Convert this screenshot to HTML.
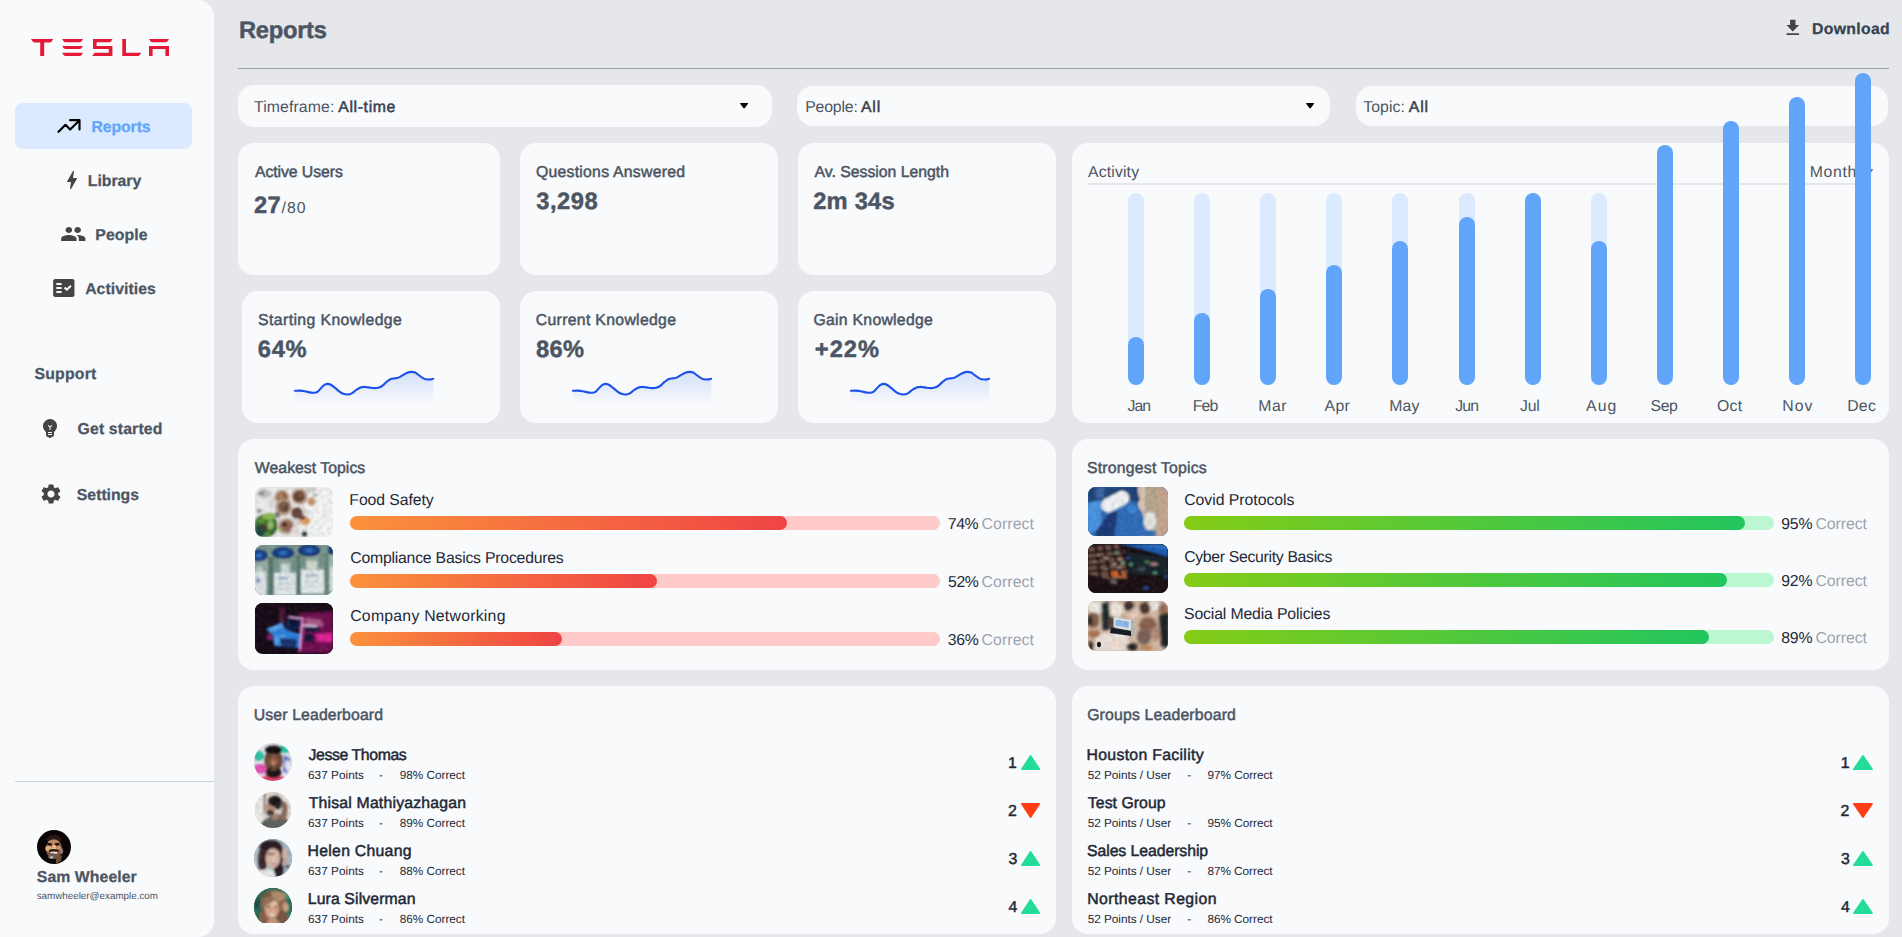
<!DOCTYPE html><html lang="en"><head><meta charset="utf-8"><title>Reports</title><style>
*{box-sizing:border-box;margin:0;padding:0}
html,body{width:1902px;height:937px;overflow:hidden;background:#e5e7eb}
body{position:relative;font-family:"Liberation Sans",sans-serif;color:#4b5563;text-rendering:geometricPrecision}
.t{position:absolute;white-space:pre;line-height:1;font-weight:400}
.b{font-weight:700;-webkit-text-stroke:.25px currentColor}
.bb{-webkit-text-stroke:.45px currentColor}
.sb{-webkit-text-stroke:.5px currentColor}
.abs{position:absolute}
.card{position:absolute;background:#f9fafb;border-radius:16px}
.sel{position:absolute;background:#f9fafb;border-radius:16px}
svg{position:absolute;display:block;overflow:visible}
.track{position:absolute;width:16px;border-radius:8px}
.bar{position:absolute;height:14px;border-radius:7px}
.av{position:absolute;border-radius:50%;overflow:hidden}
.th{position:absolute;border-radius:8px;overflow:hidden}
</style></head><body>
<aside aria-label="Sidebar"><nav>
<div class="abs" style="left:0;top:0;width:214px;height:937px;background:#f9fafb;border-radius:0 16px 16px 0"></div>
<svg role="img" aria-label="TESLA" style="left:31px;top:39px" width="138" height="17" viewBox="0 0 138 17" fill="#e31937"><title>TESLA</title>
<path d="M0 0H22.3L20.6 2.4Q20 3.4 18.6 3.4H13.2V17H9.2V3.4H3.7Q2.3 3.4 1.7 2.4Z"/>
<path d="M31.2 0H52L50.6 2.2Q50 3.2 48.6 3.2H34.6Q33.2 3.2 32.6 2.2Z"/>
<path d="M31.2 6.9H52L50.6 9.1Q50 10.1 48.6 10.1H34.6Q33.2 10.1 32.6 9.1Z"/>
<path d="M31.2 13.8H52L50.6 16Q50 17 48.6 17H34.6Q33.2 17 32.6 16Z"/>
<path d="M62 0H81.5L80.2 2.3Q79.6 3.3 78.2 3.3H65.6V6.9H81.4V17H61.2L63.6 13.8H77.8V10.1H62Z"/>
<path d="M91.3 0H95V13.7H110.2L108.8 16Q108.2 17 106.8 17H91.3Z"/>
<path d="M118 0H138L136.5 2.3Q135.9 3.3 134.5 3.3H121.5Q120.1 3.3 119.5 2.3Z"/>
<path d="M118 6.9H138V17H134.4V10.1H121.6V17H118Z"/>
</svg>
<div class="abs" style="left:15px;top:103px;width:177px;height:46px;background:#dbeafe;border-radius:8px"></div>
<svg style="left:54.7px;top:111.8px" width="28" height="28" viewBox="0 0 24 24" fill="none" stroke="#000" stroke-width="1.85" stroke-linecap="round" stroke-linejoin="round"><path d="M13 7h8m0 0v8m0-8l-8 8-4-4-6 6"/></svg>
<span id="t1" class="t b" style="left:91.42px;top:120.00px;font-size:15.80px;letter-spacing:-0.082px;color:#60a5fa;">Reports</span>
<svg style="left:60px;top:168.3px" width="24" height="24" viewBox="0 0 24 24" fill="#444"><path d="M11 21h-1l1-7H7.5c-.58 0-.57-.32-.38-.66.19-.34.05-.08.07-.12C8.48 10.94 10.42 7.54 13 3h1l-1 7h3.5c.49 0 .56.33.47.51l-.07.15C12.96 17.55 11 21 11 21z"/></svg>
<span id="t2" class="t b" style="left:87.75px;top:174.00px;font-size:15.80px;letter-spacing:-0.002px;color:#4b5563;">Library</span>
<svg style="left:60px;top:222px" width="26.5" height="24" viewBox="0 0 24 24" preserveAspectRatio="none" fill="#444"><path d="M16 11c1.66 0 2.99-1.34 2.99-3S17.66 5 16 5c-1.66 0-3 1.34-3 3s1.34 3 3 3zm-8 0c1.66 0 2.99-1.34 2.99-3S9.66 5 8 5C6.34 5 5 6.34 5 8s1.34 3 3 3zm0 2c-2.33 0-7 1.17-7 3.5V19h14v-2.5c0-2.33-4.67-3.5-7-3.5zm8 0c-.29 0-.62.02-.97.05 1.16.84 1.97 1.97 1.97 3.45V19h6v-2.5c0-2.33-4.67-3.5-7-3.5z"/></svg>
<span id="t3" class="t b" style="left:95.37px;top:228.00px;font-size:15.80px;letter-spacing:0.053px;color:#4b5563;">People</span>
<svg style="left:50.7px;top:275.9px" width="25.6" height="24" viewBox="0 0 24 24" preserveAspectRatio="none" fill="#444"><path d="M20 3H4c-1.1 0-2 .9-2 2v14c0 1.1.9 2 2 2h16c1.1 0 2-.9 2-2V5c0-1.1-.9-2-2-2zM10 17H5v-2h5v2zm0-4H5v-2h5v2zm0-4H5V7h5v2zm4.82 6L12 12.16l1.41-1.41 1.41 1.42L17.99 9l1.42 1.42L14.82 15z"/></svg>
<span id="t4" class="t b" style="left:85.16px;top:282.00px;font-size:15.80px;letter-spacing:0.053px;color:#4b5563;">Activities</span>
<span id="t5" class="t b" style="left:34.41px;top:367.00px;font-size:15.80px;letter-spacing:0.235px;color:#4b5563;">Support</span>
<svg style="left:38px;top:416px" width="24" height="24" viewBox="0 0 24 24" fill="#444"><path d="M12 3c-.46 0-.93.04-1.4.14-2.76.53-4.96 2.76-5.48 5.52-.48 2.61.48 5.01 2.22 6.56.43.38.66.91.66 1.47V19c0 1.1.9 2 2 2h.28c.35.6.98 1 1.72 1s1.38-.4 1.72-1H14c1.1 0 2-.9 2-2v-2.31c0-.55.22-1.09.64-1.46C18.09 13.95 19 12.08 19 10c0-3.87-3.13-7-7-7zm2 16h-4v-1h4v1zm0-2h-4v-1h4v1zm-1.500-5.590V14h-1v-2.590L9.670 9.590l.71-.71L12 10.500l1.620-1.620.71.71-1.830 1.820z"/></svg>
<span id="t6" class="t b" style="left:77.53px;top:422.00px;font-size:15.80px;letter-spacing:0.147px;color:#4b5563;">Get started</span>
<svg style="left:38.8px;top:482px" width="24" height="24" viewBox="0 0 24 24" fill="#444"><path d="M19.140 12.940c.04-.3.06-.61.06-.94 0-.32-.02-.64-.07-.94l2.030-1.580c.18-.14.23-.41.12-.61l-1.920-3.320c-.12-.22-.37-.29-.59-.22l-2.390.96c-.5-.38-1.030-.7-1.620-.94l-.36-2.540c-.04-.24-.24-.41-.48-.41h-3.840c-.24 0-.43.17-.47.41l-.36 2.540c-.59.24-1.130.57-1.620.94l-2.390-.96c-.22-.08-.47 0-.59.22L2.740 8.870c-.12.21-.08.47.12.61l2.030 1.580c-.05.3-.09.63-.09.94s.02.64.07.94l-2.030 1.580c-.18.14-.23.41-.12.61l1.920 3.320c.12.22.37.29.59.22l2.390-.96c.5.38 1.030.7 1.620.94l.36 2.540c.05.24.24.41.48.41h3.840c.24 0 .44-.17.47-.41l.36-2.540c.59-.24 1.130-.56 1.620-.94l2.390.96c.22.08.47 0 .59-.22l1.920-3.320c.12-.22.07-.47-.12-.61l-2.010-1.580zM12 15.600c-1.980 0-3.600-1.620-3.600-3.600s1.620-3.600 3.600-3.600 3.600 1.620 3.600 3.600-1.620 3.600-3.600 3.600z"/></svg>
<span id="t7" class="t b" style="left:76.87px;top:488.00px;font-size:15.80px;letter-spacing:-0.022px;color:#4b5563;">Settings</span>
</nav>
<div class="abs" style="left:15px;top:781px;width:199px;height:1px;background:#cbd5e1"></div>
<div class="av" style="left:37.2px;top:830px;width:34px;height:34px;background:#0a0608"><svg width="34" height="34" viewBox="0 0 34 34" style="left:0;top:0"><defs><filter id="bl0" x="-20%" y="-20%" width="140%" height="140%"><feGaussianBlur stdDeviation=".55"/></filter></defs><g filter="url(#bl0)">
<ellipse cx="17" cy="9.500" rx="7.500" ry="4.500" fill="#2a1914"/>
<ellipse cx="17" cy="19" rx="8.200" ry="10" fill="#7a5238"/>
<ellipse cx="16.500" cy="12" rx="5.500" ry="2.200" fill="#b98a62"/>
<ellipse cx="11.500" cy="18.500" rx="3.200" ry="3" fill="#e3b084"/><ellipse cx="17" cy="17.500" rx="2.300" ry="3" fill="#e9b98a"/><ellipse cx="21.500" cy="18" rx="2.600" ry="2.600" fill="#c9946c"/>
<ellipse cx="12.600" cy="14.300" rx="2.300" ry="1.200" fill="#1c0f0b"/><ellipse cx="20" cy="14.300" rx="2.300" ry="1.200" fill="#1c0f0b"/>
<ellipse cx="16.800" cy="20.600" rx="5" ry="1.500" fill="#2c1a14"/>
<ellipse cx="16.900" cy="22.800" rx="3.800" ry="1.300" fill="#eadbd0"/>
<ellipse cx="15.500" cy="26.300" rx="4.500" ry="3" fill="#6a5a52"/><ellipse cx="14.500" cy="27.300" rx="1.800" ry="1" fill="#cfc6c0"/>
<ellipse cx="24.300" cy="21" rx="1.800" ry="3" fill="#97786c"/>
<path d="M19 27L25 25L24 31L19 34Z" fill="#6e5038"/>
</g></svg></div>
<span id="t8" class="t b" style="left:36.84px;top:870.00px;font-size:15.80px;letter-spacing:0.071px;color:#4b5563;">Sam Wheeler</span>
<span id="t9" class="t " style="left:36.63px;top:892.00px;font-size:9.80px;letter-spacing:0.016px;color:#4b5563;">samwheeler@example.com</span>
</aside><main><header>
<span id="t10" class="t b bb" style="left:239.06px;top:20.00px;font-size:23.70px;letter-spacing:-0.282px;color:#4b5563;">Reports</span>
<svg style="left:1782.1px;top:17.1px" width="21.6" height="21.6" viewBox="0 0 24 24" fill="#444"><path d="M19 9h-4V3H9v6H5l7 7 7-7zM5 18v2h14v-2H5z"/></svg>
<span id="t11" class="t b" style="left:1811.98px;top:22.00px;font-size:15.80px;letter-spacing:0.322px;color:#374151;">Download</span>
<div class="abs" style="left:238px;top:68px;width:1651px;height:1px;background:#9ca3af"></div>
</header><section aria-label="Filters">
<div class="sel" style="left:238px;top:85px;width:534px;height:42px"></div>
<div class="sel" style="left:797px;top:86px;width:533px;height:40px"></div>
<div class="sel" style="left:1356px;top:86px;width:532px;height:40px"></div>
<svg style="left:739.7px;top:103.2px" width="8.2" height="5.6" viewBox="0 0 8.2 5.6" fill="#000"><path d="M.5 0H7.7Q8.500 0 8 .7L4.800 5Q4.100 5.900 3.400 5L.2 .7Q-.3 0 .5 0Z"/></svg>
<svg style="left:1305.7px;top:103.2px" width="8.2" height="5.6" viewBox="0 0 8.2 5.6" fill="#000"><path d="M.5 0H7.7Q8.500 0 8 .7L4.800 5Q4.100 5.900 3.400 5L.2 .7Q-.3 0 .5 0Z"/></svg>
<svg style="left:1863.4px;top:103.2px" width="8.2" height="5.6" viewBox="0 0 8.2 5.6" fill="#6b7280"><path d="M.5 0H7.7Q8.500 0 8 .7L4.800 5Q4.100 5.900 3.400 5L.2 .7Q-.3 0 .5 0Z"/></svg>
<span id="t12" class="t " style="left:253.98px;top:100.00px;font-size:15.80px;letter-spacing:0.113px;color:#4b5563;">Timeframe:</span>
<span id="t13" class="t sb" style="left:338.23px;top:100.00px;font-size:15.80px;letter-spacing:0.641px;color:#374151;">All-time</span>
<span id="t14" class="t " style="left:805.14px;top:100.00px;font-size:15.80px;letter-spacing:-0.134px;color:#4b5563;">People:</span>
<span id="t15" class="t sb" style="left:860.92px;top:100.00px;font-size:15.80px;letter-spacing:0.865px;color:#374151;">All</span>
<span id="t16" class="t " style="left:1363.36px;top:100.00px;font-size:15.80px;letter-spacing:0.029px;color:#4b5563;">Topic:</span>
<span id="t17" class="t sb" style="left:1408.68px;top:100.00px;font-size:15.80px;letter-spacing:0.928px;color:#374151;">All</span>
</section><section aria-label="Stats">
<div class="card" style="left:238px;top:143px;width:262px;height:132px"></div>
<div class="card" style="left:520px;top:143px;width:258px;height:132px"></div>
<div class="card" style="left:798px;top:143px;width:258px;height:132px"></div>
<div class="card" style="left:242px;top:291px;width:258px;height:132px"></div>
<div class="card" style="left:520px;top:291px;width:258px;height:132px"></div>
<div class="card" style="left:798px;top:291px;width:258px;height:132px"></div>
<span id="t18" class="t sb" style="left:254.92px;top:165.00px;font-size:15.80px;letter-spacing:-0.065px;">Active Users</span>
<span id="t19" class="t b bb" style="left:253.90px;top:195.00px;font-size:23.70px;letter-spacing:0.500px;">27</span>
<span id="t20" class="t " style="left:281.50px;top:201.00px;font-size:15.80px;letter-spacing:1.000px;">/80</span>
<span id="t21" class="t sb" style="left:535.99px;top:165.00px;font-size:15.80px;letter-spacing:0.242px;">Questions Answered</span>
<span id="t22" class="t b bb" style="left:536.15px;top:191.00px;font-size:23.70px;letter-spacing:0.563px;">3,298</span>
<span id="t23" class="t sb" style="left:814.54px;top:165.00px;font-size:15.80px;letter-spacing:-0.010px;">Av. Session Length</span>
<span id="t24" class="t b bb" style="left:813.16px;top:191.00px;font-size:23.70px;letter-spacing:0.244px;">2m 34s</span>
<span id="t25" class="t sb" style="left:258.09px;top:313.00px;font-size:15.80px;letter-spacing:0.396px;">Starting Knowledge</span>
<span id="t26" class="t b bb" style="left:257.83px;top:339.00px;font-size:23.70px;letter-spacing:0.673px;">64%</span>
<span id="t27" class="t sb" style="left:535.77px;top:313.00px;font-size:15.80px;letter-spacing:0.313px;">Current Knowledge</span>
<span id="t28" class="t b bb" style="left:536.03px;top:339.00px;font-size:23.70px;letter-spacing:0.307px;">86%</span>
<span id="t29" class="t sb" style="left:813.51px;top:313.00px;font-size:15.80px;letter-spacing:0.258px;">Gain Knowledge</span>
<span id="t30" class="t b bb" style="left:814.86px;top:339.00px;font-size:23.70px;letter-spacing:0.961px;">+22%</span>
<svg width="0" height="0" style="left:0;top:0"><defs><linearGradient id="sg" x1="0" y1="0" x2="0" y2="1"><stop offset="0" stop-color="#3b82f6" stop-opacity=".2"/><stop offset="1" stop-color="#2563eb" stop-opacity="0"/></linearGradient></defs></svg>
<svg style="left:295.4px;top:368px" width="139" height="37" viewBox="0 0 139 37"><path d="M-0.1 22.8C0.8 22.8 3.5 22.5 5.1 22.6C6.8 22.7 8.2 22.9 9.8 23.2C11.4 23.5 13.1 24.1 14.5 24.4C15.9 24.7 17.2 24.9 18.5 24.8C19.8 24.7 21.1 24.7 22.4 23.8C23.7 23.0 25.2 20.8 26.4 19.7C27.6 18.5 28.4 17.5 29.5 16.9C30.6 16.3 31.7 15.9 32.7 15.9C33.8 15.9 34.6 16.1 35.8 16.7C37.0 17.3 38.4 18.5 39.8 19.7C41.3 20.8 43.1 22.6 44.5 23.6C45.9 24.6 47.1 25.3 48.4 25.8C49.7 26.3 51.1 26.5 52.4 26.5C53.7 26.5 54.9 26.4 56.3 25.6C57.8 24.9 59.7 23.0 61.1 22.0C62.6 21.0 63.7 20.2 65.0 19.7C66.3 19.2 67.5 18.9 68.9 18.9C70.4 18.8 72.0 19.2 73.7 19.4C75.4 19.6 77.5 20.1 79.2 20.1C80.9 20.1 82.5 20.0 83.9 19.5C85.4 19.0 86.6 18.3 87.9 17.3C89.2 16.3 90.5 14.7 91.8 13.7C93.1 12.6 94.5 11.6 95.8 11.0C97.1 10.4 98.4 10.6 99.7 10.4C101.0 10.2 102.2 10.2 103.6 9.6C105.1 9.0 107.0 7.7 108.4 6.9C109.9 6.1 111.0 5.2 112.3 4.7C113.6 4.2 115.0 3.9 116.3 3.9C117.6 3.9 118.9 3.9 120.2 4.5C121.5 5.1 122.7 6.4 124.1 7.4C125.6 8.4 127.5 9.9 128.9 10.6C130.4 11.3 131.6 11.4 132.8 11.5C134.0 11.6 135.1 11.5 136.0 11.4C136.9 11.3 137.8 10.8 138.2 10.7L138.5 36L0 36Z" fill="url(#sg)"/><path d="M-0.1 22.8C0.8 22.8 3.5 22.5 5.1 22.6C6.8 22.7 8.2 22.9 9.8 23.2C11.4 23.5 13.1 24.1 14.5 24.4C15.9 24.7 17.2 24.9 18.5 24.8C19.8 24.7 21.1 24.7 22.4 23.8C23.7 23.0 25.2 20.8 26.4 19.7C27.6 18.5 28.4 17.5 29.5 16.9C30.6 16.3 31.7 15.9 32.7 15.9C33.8 15.9 34.6 16.1 35.8 16.7C37.0 17.3 38.4 18.5 39.8 19.7C41.3 20.8 43.1 22.6 44.5 23.6C45.9 24.6 47.1 25.3 48.4 25.8C49.7 26.3 51.1 26.5 52.4 26.5C53.7 26.5 54.9 26.4 56.3 25.6C57.8 24.9 59.7 23.0 61.1 22.0C62.6 21.0 63.7 20.2 65.0 19.7C66.3 19.2 67.5 18.9 68.9 18.9C70.4 18.8 72.0 19.2 73.7 19.4C75.4 19.6 77.5 20.1 79.2 20.1C80.9 20.1 82.5 20.0 83.9 19.5C85.4 19.0 86.6 18.3 87.9 17.3C89.2 16.3 90.5 14.7 91.8 13.7C93.1 12.6 94.5 11.6 95.8 11.0C97.1 10.4 98.4 10.6 99.7 10.4C101.0 10.2 102.2 10.2 103.6 9.6C105.1 9.0 107.0 7.7 108.4 6.9C109.9 6.1 111.0 5.2 112.3 4.7C113.6 4.2 115.0 3.9 116.3 3.9C117.6 3.9 118.9 3.9 120.2 4.5C121.5 5.1 122.7 6.4 124.1 7.4C125.6 8.4 127.5 9.9 128.9 10.6C130.4 11.3 131.6 11.4 132.8 11.5C134.0 11.6 135.1 11.5 136.0 11.4C136.9 11.3 137.8 10.8 138.2 10.7" fill="none" stroke="#1b50ec" stroke-width="2.1" stroke-linecap="round"/></svg>
<svg style="left:573.4px;top:368px" width="139" height="37" viewBox="0 0 139 37"><path d="M-0.1 22.8C0.8 22.8 3.5 22.5 5.1 22.6C6.8 22.7 8.2 22.9 9.8 23.2C11.4 23.5 13.1 24.1 14.5 24.4C15.9 24.7 17.2 24.9 18.5 24.8C19.8 24.7 21.1 24.7 22.4 23.8C23.7 23.0 25.2 20.8 26.4 19.7C27.6 18.5 28.4 17.5 29.5 16.9C30.6 16.3 31.7 15.9 32.7 15.9C33.8 15.9 34.6 16.1 35.8 16.7C37.0 17.3 38.4 18.5 39.8 19.7C41.3 20.8 43.1 22.6 44.5 23.6C45.9 24.6 47.1 25.3 48.4 25.8C49.7 26.3 51.1 26.5 52.4 26.5C53.7 26.5 54.9 26.4 56.3 25.6C57.8 24.9 59.7 23.0 61.1 22.0C62.6 21.0 63.7 20.2 65.0 19.7C66.3 19.2 67.5 18.9 68.9 18.9C70.4 18.8 72.0 19.2 73.7 19.4C75.4 19.6 77.5 20.1 79.2 20.1C80.9 20.1 82.5 20.0 83.9 19.5C85.4 19.0 86.6 18.3 87.9 17.3C89.2 16.3 90.5 14.7 91.8 13.7C93.1 12.6 94.5 11.6 95.8 11.0C97.1 10.4 98.4 10.6 99.7 10.4C101.0 10.2 102.2 10.2 103.6 9.6C105.1 9.0 107.0 7.7 108.4 6.9C109.9 6.1 111.0 5.2 112.3 4.7C113.6 4.2 115.0 3.9 116.3 3.9C117.6 3.9 118.9 3.9 120.2 4.5C121.5 5.1 122.7 6.4 124.1 7.4C125.6 8.4 127.5 9.9 128.9 10.6C130.4 11.3 131.6 11.4 132.8 11.5C134.0 11.6 135.1 11.5 136.0 11.4C136.9 11.3 137.8 10.8 138.2 10.7L138.5 36L0 36Z" fill="url(#sg)"/><path d="M-0.1 22.8C0.8 22.8 3.5 22.5 5.1 22.6C6.8 22.7 8.2 22.9 9.8 23.2C11.4 23.5 13.1 24.1 14.5 24.4C15.9 24.7 17.2 24.9 18.5 24.8C19.8 24.7 21.1 24.7 22.4 23.8C23.7 23.0 25.2 20.8 26.4 19.7C27.6 18.5 28.4 17.5 29.5 16.9C30.6 16.3 31.7 15.9 32.7 15.9C33.8 15.9 34.6 16.1 35.8 16.7C37.0 17.3 38.4 18.5 39.8 19.7C41.3 20.8 43.1 22.6 44.5 23.6C45.9 24.6 47.1 25.3 48.4 25.8C49.7 26.3 51.1 26.5 52.4 26.5C53.7 26.5 54.9 26.4 56.3 25.6C57.8 24.9 59.7 23.0 61.1 22.0C62.6 21.0 63.7 20.2 65.0 19.7C66.3 19.2 67.5 18.9 68.9 18.9C70.4 18.8 72.0 19.2 73.7 19.4C75.4 19.6 77.5 20.1 79.2 20.1C80.9 20.1 82.5 20.0 83.9 19.5C85.4 19.0 86.6 18.3 87.9 17.3C89.2 16.3 90.5 14.7 91.8 13.7C93.1 12.6 94.5 11.6 95.8 11.0C97.1 10.4 98.4 10.6 99.7 10.4C101.0 10.2 102.2 10.2 103.6 9.6C105.1 9.0 107.0 7.7 108.4 6.9C109.9 6.1 111.0 5.2 112.3 4.7C113.6 4.2 115.0 3.9 116.3 3.9C117.6 3.9 118.9 3.9 120.2 4.5C121.5 5.1 122.7 6.4 124.1 7.4C125.6 8.4 127.5 9.9 128.9 10.6C130.4 11.3 131.6 11.4 132.8 11.5C134.0 11.6 135.1 11.5 136.0 11.4C136.9 11.3 137.8 10.8 138.2 10.7" fill="none" stroke="#1b50ec" stroke-width="2.1" stroke-linecap="round"/></svg>
<svg style="left:851.4px;top:368px" width="139" height="37" viewBox="0 0 139 37"><path d="M-0.1 22.8C0.8 22.8 3.5 22.5 5.1 22.6C6.8 22.7 8.2 22.9 9.8 23.2C11.4 23.5 13.1 24.1 14.5 24.4C15.9 24.7 17.2 24.9 18.5 24.8C19.8 24.7 21.1 24.7 22.4 23.8C23.7 23.0 25.2 20.8 26.4 19.7C27.6 18.5 28.4 17.5 29.5 16.9C30.6 16.3 31.7 15.9 32.7 15.9C33.8 15.9 34.6 16.1 35.8 16.7C37.0 17.3 38.4 18.5 39.8 19.7C41.3 20.8 43.1 22.6 44.5 23.6C45.9 24.6 47.1 25.3 48.4 25.8C49.7 26.3 51.1 26.5 52.4 26.5C53.7 26.5 54.9 26.4 56.3 25.6C57.8 24.9 59.7 23.0 61.1 22.0C62.6 21.0 63.7 20.2 65.0 19.7C66.3 19.2 67.5 18.9 68.9 18.9C70.4 18.8 72.0 19.2 73.7 19.4C75.4 19.6 77.5 20.1 79.2 20.1C80.9 20.1 82.5 20.0 83.9 19.5C85.4 19.0 86.6 18.3 87.9 17.3C89.2 16.3 90.5 14.7 91.8 13.7C93.1 12.6 94.5 11.6 95.8 11.0C97.1 10.4 98.4 10.6 99.7 10.4C101.0 10.2 102.2 10.2 103.6 9.6C105.1 9.0 107.0 7.7 108.4 6.9C109.9 6.1 111.0 5.2 112.3 4.7C113.6 4.2 115.0 3.9 116.3 3.9C117.6 3.9 118.9 3.9 120.2 4.5C121.5 5.1 122.7 6.4 124.1 7.4C125.6 8.4 127.5 9.9 128.9 10.6C130.4 11.3 131.6 11.4 132.8 11.5C134.0 11.6 135.1 11.5 136.0 11.4C136.9 11.3 137.8 10.8 138.2 10.7L138.5 36L0 36Z" fill="url(#sg)"/><path d="M-0.1 22.8C0.8 22.8 3.5 22.5 5.1 22.6C6.8 22.7 8.2 22.9 9.8 23.2C11.4 23.5 13.1 24.1 14.5 24.4C15.9 24.7 17.2 24.9 18.5 24.8C19.8 24.7 21.1 24.7 22.4 23.8C23.7 23.0 25.2 20.8 26.4 19.7C27.6 18.5 28.4 17.5 29.5 16.9C30.6 16.3 31.7 15.9 32.7 15.9C33.8 15.9 34.6 16.1 35.8 16.7C37.0 17.3 38.4 18.5 39.8 19.7C41.3 20.8 43.1 22.6 44.5 23.6C45.9 24.6 47.1 25.3 48.4 25.8C49.7 26.3 51.1 26.5 52.4 26.5C53.7 26.5 54.9 26.4 56.3 25.6C57.8 24.9 59.7 23.0 61.1 22.0C62.6 21.0 63.7 20.2 65.0 19.7C66.3 19.2 67.5 18.9 68.9 18.9C70.4 18.8 72.0 19.2 73.7 19.4C75.4 19.6 77.5 20.1 79.2 20.1C80.9 20.1 82.5 20.0 83.9 19.5C85.4 19.0 86.6 18.3 87.9 17.3C89.2 16.3 90.5 14.7 91.8 13.7C93.1 12.6 94.5 11.6 95.8 11.0C97.1 10.4 98.4 10.6 99.7 10.4C101.0 10.2 102.2 10.2 103.6 9.6C105.1 9.0 107.0 7.7 108.4 6.9C109.9 6.1 111.0 5.2 112.3 4.7C113.6 4.2 115.0 3.9 116.3 3.9C117.6 3.9 118.9 3.9 120.2 4.5C121.5 5.1 122.7 6.4 124.1 7.4C125.6 8.4 127.5 9.9 128.9 10.6C130.4 11.3 131.6 11.4 132.8 11.5C134.0 11.6 135.1 11.5 136.0 11.4C136.9 11.3 137.8 10.8 138.2 10.7" fill="none" stroke="#1b50ec" stroke-width="2.1" stroke-linecap="round"/></svg>
</section><section aria-label="Activity">
<div class="card" style="left:1072px;top:143px;width:817px;height:280px"></div>
<span id="t31" class="t " style="left:1087.94px;top:165.00px;font-size:15.80px;letter-spacing:0.154px;color:#4b5563;">Activity</span>
<span id="t32" class="t " style="left:1809.80px;top:165.00px;font-size:15.80px;letter-spacing:0.650px;color:#4b5563;">Month</span>
<svg style="left:1865px;top:168.5px" width="8.200" height="5.600" viewBox="0 0 8.2 5.6" fill="#6b7280"><path d="M.5 0H7.7Q8.500 0 8 .7L4.800 5Q4.100 5.900 3.400 5L.2 .7Q-.3 0 .5 0Z"/></svg>
<div class="abs" style="left:1088px;top:183px;width:785px;height:2px;background:#e5e7eb"></div>
<div class="track" style="left:1128.0px;top:193px;height:192px;background:#dbeafe"></div>
<div class="track" style="left:1128.0px;top:337px;height:48px;background:#60a5fa"></div>
<div class="track" style="left:1194.1px;top:193px;height:192px;background:#dbeafe"></div>
<div class="track" style="left:1194.1px;top:313px;height:72px;background:#60a5fa"></div>
<div class="track" style="left:1260.2px;top:193px;height:192px;background:#dbeafe"></div>
<div class="track" style="left:1260.2px;top:289px;height:96px;background:#60a5fa"></div>
<div class="track" style="left:1326.3px;top:193px;height:192px;background:#dbeafe"></div>
<div class="track" style="left:1326.3px;top:265px;height:120px;background:#60a5fa"></div>
<div class="track" style="left:1392.4px;top:193px;height:192px;background:#dbeafe"></div>
<div class="track" style="left:1392.4px;top:241px;height:144px;background:#60a5fa"></div>
<div class="track" style="left:1458.5px;top:193px;height:192px;background:#dbeafe"></div>
<div class="track" style="left:1458.5px;top:217px;height:168px;background:#60a5fa"></div>
<div class="track" style="left:1524.5px;top:193px;height:192px;background:#dbeafe"></div>
<div class="track" style="left:1524.5px;top:193px;height:192px;background:#60a5fa"></div>
<div class="track" style="left:1590.6px;top:193px;height:192px;background:#dbeafe"></div>
<div class="track" style="left:1590.6px;top:241px;height:144px;background:#60a5fa"></div>
<div class="track" style="left:1656.7px;top:193px;height:192px;background:#dbeafe"></div>
<div class="track" style="left:1656.7px;top:145px;height:240px;background:#60a5fa"></div>
<div class="track" style="left:1722.8px;top:193px;height:192px;background:#dbeafe"></div>
<div class="track" style="left:1722.8px;top:121px;height:264px;background:#60a5fa"></div>
<div class="track" style="left:1788.9px;top:193px;height:192px;background:#dbeafe"></div>
<div class="track" style="left:1788.9px;top:97px;height:288px;background:#60a5fa"></div>
<div class="track" style="left:1855.0px;top:193px;height:192px;background:#dbeafe"></div>
<div class="track" style="left:1855.0px;top:73px;height:312px;background:#60a5fa"></div>
<span id="t33" class="t " style="left:1127.53px;top:399.00px;font-size:15.80px;letter-spacing:-1.033px;color:#4b5563;">Jan</span>
<span id="t34" class="t " style="left:1192.63px;top:399.00px;font-size:15.80px;letter-spacing:-0.722px;color:#4b5563;">Feb</span>
<span id="t35" class="t " style="left:1258.14px;top:399.00px;font-size:15.80px;letter-spacing:0.609px;color:#4b5563;">Mar</span>
<span id="t36" class="t " style="left:1324.54px;top:399.00px;font-size:15.80px;letter-spacing:0.340px;color:#4b5563;">Apr</span>
<span id="t37" class="t " style="left:1389.14px;top:399.00px;font-size:15.80px;letter-spacing:0.246px;color:#4b5563;">May</span>
<span id="t38" class="t " style="left:1455.15px;top:399.00px;font-size:15.80px;letter-spacing:-0.744px;color:#4b5563;">Jun</span>
<span id="t39" class="t " style="left:1519.93px;top:399.00px;font-size:15.80px;letter-spacing:-0.170px;color:#4b5563;">Jul</span>
<span id="t40" class="t " style="left:1586.07px;top:399.00px;font-size:15.80px;letter-spacing:1.053px;color:#4b5563;">Aug</span>
<span id="t41" class="t " style="left:1650.54px;top:399.00px;font-size:15.80px;letter-spacing:-0.438px;color:#4b5563;">Sep</span>
<span id="t42" class="t " style="left:1716.92px;top:399.00px;font-size:15.80px;letter-spacing:0.337px;color:#4b5563;">Oct</span>
<span id="t43" class="t " style="left:1782.14px;top:399.00px;font-size:15.80px;letter-spacing:1.116px;color:#4b5563;">Nov</span>
<span id="t44" class="t " style="left:1847.16px;top:399.00px;font-size:15.80px;letter-spacing:0.301px;color:#4b5563;">Dec</span>
</section><section aria-label="Topics">
<div class="card" style="left:238px;top:439px;width:818px;height:231px"></div>
<div class="card" style="left:1072px;top:439px;width:817px;height:231px"></div>
<span id="t45" class="t sb" style="left:254.86px;top:461.00px;font-size:15.80px;letter-spacing:0.024px;">Weakest Topics</span>
<span id="t46" class="t sb" style="left:1087.01px;top:461.00px;font-size:15.80px;letter-spacing:0.210px;">Strongest Topics</span>
<svg width="0" height="0" style="left:0;top:0"><defs>
<filter id="b1" x="-10%" y="-10%" width="120%" height="120%"><feGaussianBlur stdDeviation="0.9"/></filter>
<filter id="b2" x="-10%" y="-10%" width="120%" height="120%"><feGaussianBlur stdDeviation="1.5"/></filter>
<filter id="b3" x="-10%" y="-10%" width="120%" height="120%"><feGaussianBlur stdDeviation="0.6"/></filter>
<filter id="gr" x="0" y="0" width="100%" height="100%"><feTurbulence type="fractalNoise" baseFrequency="0.22" numOctaves="2" seed="7" result="n"/><feColorMatrix in="n" type="matrix" values="0 0 0 0 0  0 0 0 0 0  0 0 0 0 0  1.6 1.6 0 0 -1.25"/></filter>
<filter id="gw" x="0" y="0" width="100%" height="100%"><feTurbulence type="fractalNoise" baseFrequency="0.25" numOctaves="2" seed="11" result="n"/><feColorMatrix in="n" type="matrix" values="0 0 0 0 1  0 0 0 0 1  0 0 0 0 1  0 1.6 1.6 0 -1.3"/></filter>
<radialGradient id="cap"><stop offset="0" stop-color="#4590e4"/><stop offset=".4" stop-color="#1c4c9c"/><stop offset="1" stop-color="#0f2c66"/></radialGradient>
</defs></svg>
<div class="th" style="left:255.0px;top:487.0px;width:78px;height:50px;background:#eee"><svg width="78" height="50" viewBox="0 0 78 50" style="left:0;top:0"><rect width="78" height="50" fill="#eceded"/><rect x="52" width="26" height="50" fill="#f3f4f6"/>
<g filter="url(#b1)">
<ellipse cx="9" cy="7" rx="7" ry="4.500" fill="#c9c6c2"/><ellipse cx="7" cy="6" rx="3" ry="2" fill="#8f8c90"/><ellipse cx="4" cy="24" rx="2.500" ry="2.500" fill="#9d9ca6"/><ellipse cx="17" cy="16" rx="3" ry="6" fill="#dcdcdc"/>
<ellipse cx="56" cy="3" rx="6" ry="3" fill="#cfcdc6"/><ellipse cx="60" cy="8" rx="3" ry="1.500" fill="#b9b6ae"/>
<circle cx="27" cy="10.500" r="8" fill="#d2b8a6"/><circle cx="27" cy="10" r="5.800" fill="#93664a"/><circle cx="25.500" cy="9" r="2.500" fill="#b5855f"/>
<circle cx="44.500" cy="9.500" r="8" fill="#b89a86"/><circle cx="44" cy="9.500" r="5.800" fill="#62402f"/><circle cx="46" cy="8" r="2.200" fill="#8a5a3c"/>
<circle cx="28.500" cy="20.500" r="8.500" fill="#bfa292"/><circle cx="29" cy="20" r="6" fill="#7d5a48"/><circle cx="31" cy="21.500" r="2.500" fill="#5a3e34"/>
<circle cx="56.500" cy="14.500" r="4.300" fill="#cda383"/><circle cx="56" cy="15" r="2" fill="#b98b62"/>
<circle cx="44" cy="28.500" r="9.500" fill="#dedad6"/><circle cx="42" cy="26" r="5.800" fill="#614438"/><circle cx="43.500" cy="28.500" r="1.600" fill="#a0325c"/>
<ellipse cx="50" cy="34" rx="5.500" ry="4" fill="#e3a46a"/><ellipse cx="47" cy="30.500" rx="3.500" ry="2.500" fill="#6b4a3a"/>
<circle cx="31" cy="39.500" r="8.500" fill="#c3b0a4"/><circle cx="31.500" cy="39" r="6.200" fill="#8f6552"/><circle cx="29.500" cy="37.500" r="2.400" fill="#4a2c22"/><circle cx="33" cy="41" r="1.500" fill="#b04a6a"/>
<ellipse cx="40" cy="44" rx="4" ry="5" fill="#e3ddd8"/><ellipse cx="22" cy="28" rx="3" ry="3" fill="#77777a"/>
<circle cx="11" cy="38.500" r="11.500" fill="#3a6a35"/><ellipse cx="5.500" cy="44" rx="6" ry="6" fill="#1f4a40"/><ellipse cx="9" cy="40" rx="2.500" ry="3" fill="#5a2f2a"/>
<ellipse cx="14" cy="29.500" rx="7" ry="3.500" fill="#8dbb55"/><ellipse cx="15.500" cy="38" rx="3" ry="4.500" fill="#93bd63"/><ellipse cx="6.500" cy="34" rx="4" ry="2.200" fill="#5f9535"/><ellipse cx="12" cy="47" rx="3" ry="2" fill="#5a8f3a"/>
<ellipse cx="25" cy="43" rx="1.600" ry="2" fill="#8fbf4f"/>
<circle cx="49.500" cy="47" r="2.600" fill="#2c352f"/>
</g><rect width="78" height="50" filter="url(#gr)" opacity=".08"/><rect width="78" height="50" filter="url(#gw)" opacity=".05"/></svg></div>
<div class="th" style="left:255.0px;top:545.0px;width:78px;height:50px;background:#7f9b92"><svg width="78" height="50" viewBox="0 0 78 50" style="left:0;top:0"><rect width="78" height="50" fill="#7b978e"/>
<g filter="url(#b1)">
<rect x="13" y="12" width="6" height="38" fill="#587a70"/><rect x="41" y="10" width="5" height="40" fill="#587a70"/><rect x="69" y="8" width="5" height="42" fill="#63847a"/>
<rect x="-2" y="14" width="15" height="40" fill="#93aba4"/><rect x="19" y="14" width="22" height="40" fill="#8ea69f"/><rect x="46" y="12" width="23" height="40" fill="#90a8a1"/><rect x="74" y="10" width="8" height="42" fill="#a3b8b1"/>
<rect x="20" y="13" width="3" height="14" fill="#6d8c83"/><rect x="37" y="13" width="3" height="14" fill="#6d8c83"/><rect x="47" y="11" width="3" height="12" fill="#6d8c83"/><rect x="64" y="11" width="4" height="12" fill="#6d8c83"/>
<rect x="26" y="19" width="8" height="9" fill="#ccd9d6"/><rect x="52" y="16" width="10" height="9" fill="#d3d8cc"/><rect x="2" y="22" width="6" height="6" fill="#c2cec9"/>
<rect x="-2" y="27" width="13" height="26" fill="#dde5e7"/><rect x="19" y="28" width="22" height="22" fill="#dfe7ea"/><rect x="46" y="25" width="23" height="23" fill="#e3eaec"/><rect x="75" y="22" width="5" height="24" fill="#dbe3e2"/>
<rect x="24" y="32" width="9" height="2.500" fill="#8fa5c4"/><rect x="22" y="38" width="15" height="1.500" fill="#c3ced2"/><rect x="22" y="43" width="12" height="1.500" fill="#c3ced2"/><rect x="51" y="29" width="12" height="2.500" fill="#a9b7bb"/><rect x="50" y="36" width="15" height="1.500" fill="#c6d0d3"/><rect x="52" y="41" width="10" height="1.500" fill="#c6d0d3"/><rect x="1" y="33" width="4" height="5" fill="#8a8fc0"/>
<ellipse cx="4" cy="10.500" rx="8.500" ry="6" fill="url(#cap)"/><ellipse cx="28" cy="8" rx="11" ry="6" fill="url(#cap)"/><ellipse cx="54" cy="5.500" rx="11" ry="6" fill="url(#cap)"/><ellipse cx="77" cy="5" rx="4" ry="5" fill="#163c82"/>
</g><rect width="78" height="50" filter="url(#gr)" opacity=".08"/><rect width="78" height="50" filter="url(#gw)" opacity=".05"/></svg></div>
<div class="th" style="left:255.0px;top:603.0px;width:78px;height:51px;background:#150a15"><svg width="78" height="51" viewBox="0 0 78 51" style="left:0;top:0"><rect width="78" height="50" fill="#150a15"/>
<g filter="url(#b2)">
<path d="M44 10L78 8V50H42L46 30Z" fill="#6e1150"/><path d="M24 4L30 4L30 22L24 24Z" fill="#4d1238"/>
<path d="M60 31L78 30V39L62 38Z" fill="#e3249c"/><path d="M12 32L18 31L18 37L12 36Z" fill="#a0207a"/>
<path d="M50 15L66 17L68 24L52 22Z" fill="#b05a8a"/>
</g><g filter="url(#b1)">
<path d="M11 26L27 19L31 27L46 31L44 45L19 43L18 33Z" fill="#2f80dc"/>
<path d="M13 25L26 21L28 25L15 29Z" fill="#5aa6ee"/><path d="M18 33L30 31L30 41L20 42Z" fill="#4a98ea"/>
<rect x="31" y="15" width="13" height="12" fill="#0f1d48"/><rect x="36" y="17.500" width="5" height="3.500" fill="#0a0c14"/>
<path d="M25 35L42 36L41 45L26 44Z" fill="#16306e"/>
<path d="M33 12.500L49 14.500L48 23L46.500 46L44 49L45 27L46.500 16.500L33 14.500Z" fill="#e3a6e6" opacity=".9"/>
<rect x="50" y="24" width="14" height="4.500" fill="#151c38"/><rect x="50" y="31.500" width="8" height="7" fill="#10183a"/>
<path d="M48 21L62 22L62 24L48 23.500Z" fill="#d9c6e8"/>
</g><rect width="78" height="51" filter="url(#gr)" opacity=".08"/><rect width="78" height="51" filter="url(#gw)" opacity=".05"/></svg></div>
<div class="th" style="left:1088.0px;top:487.0px;width:80px;height:49px;background:#2f6ab3"><svg width="80" height="49" viewBox="0 0 80 49" style="left:0;top:0"><rect width="80" height="49" fill="#2f6ab3"/>
<g filter="url(#b1)">
<rect x="50" y="-2" width="32" height="54" fill="#b6a68e"/><rect x="50" y="-2" width="7" height="54" fill="#d9c3b2"/><rect x="70" y="-2" width="12" height="54" fill="#c6a690"/>
<path d="M0 0H50V16L38 10L14 14L0 18Z" fill="#1f4279"/><rect x="8" y="1" width="8" height="10" fill="#3f68a6"/>
<path d="M-1 16L12 13L14 40L4 46L-1 46Z" fill="#4a93e2"/>
<path d="M8 44L24 22L30 26L26 50H8Z" fill="#1e3a78"/>
<path d="M30 24L48 14L56 30L58 50H28Z" fill="#2d6cba"/><ellipse cx="44" cy="22" rx="5" ry="4" fill="#3b86d6"/>
<path d="M38 12L50 16L52 12L50 6Z" fill="#1f4279"/>
<g transform="rotate(-27 27 14.500)"><rect x="12" y="7.500" width="30" height="14.500" rx="7" fill="#f0f3f6"/></g>
<ellipse cx="62" cy="34" rx="6.500" ry="9.500" fill="#e4e4e0"/>
<path d="M55 42L68 44L67 50H56Z" fill="#2f6ab8"/>
</g><rect width="80" height="49" filter="url(#gr)" opacity=".08"/><rect width="80" height="49" filter="url(#gw)" opacity=".05"/></svg></div>
<div class="th" style="left:1088.0px;top:544.0px;width:80px;height:49px;background:#1a0f12"><svg width="80" height="49" viewBox="0 0 80 49" style="left:0;top:0"><rect width="80" height="49" fill="#1a0f12"/>
<g filter="url(#b1)">
<path d="M0 3L30 0L44 14L38 34L22 36L0 30Z" fill="#6e4f44"/>
<path d="M30 0H80V13L52 5Z" fill="#1d5cb0"/><path d="M48 0H80V6Z" fill="#2a72c8"/>
<path d="M36 8L80 14V32L40 30Z" fill="#12202b"/>
<path d="M20 26L36 27L40 35L24 33Z" fill="#b0623c"/><ellipse cx="27" cy="30" rx="4.500" ry="2" fill="#d0622c"/>
<g fill="#1c1114"><path d="M0 8L36 4L37 6L0 10.500Z"/><path d="M0 14L40 10L41 12L0 16.500Z"/><path d="M0 20L40 17L41 19L0 22.500Z"/><path d="M0 26L38 24L39 26L0 28.500Z"/>
<path d="M6 2L9 2L14 34L11 34Z"/><path d="M14 1L17 1L24 34L21 34Z"/><path d="M22 0L25 0L34 32L31 32Z"/><path d="M30 0L33 0L42 26L39 26Z"/></g>
<ellipse cx="18" cy="14" rx="3" ry="1.200" fill="#a98a7c"/><ellipse cx="26" cy="20" rx="3" ry="1.200" fill="#a98a7c"/><ellipse cx="10" cy="11" rx="2.500" ry="1" fill="#9a7a6e"/><ellipse cx="32" cy="15" rx="3" ry="1.200" fill="#a08576"/><ellipse cx="31" cy="23.500" rx="3" ry="1.200" fill="#9c8478"/><ellipse cx="17" cy="25" rx="3" ry="1.200" fill="#8c6c60"/><ellipse cx="8" cy="18" rx="2.500" ry="1" fill="#8c6c60"/>
<ellipse cx="35" cy="18.500" rx="2.500" ry="1.500" fill="#5c9a7c"/><ellipse cx="43" cy="20.500" rx="2.500" ry="1.400" fill="#4f9472"/><ellipse cx="28" cy="9" rx="2" ry="1.200" fill="#5c9a7c"/><ellipse cx="59" cy="18" rx="3" ry="1.400" fill="#4f7a52"/><ellipse cx="67" cy="29" rx="2.500" ry="1.600" fill="#5c9a7c"/>
<ellipse cx="66" cy="20" rx="4" ry="1.800" fill="#a07a7c"/><ellipse cx="54" cy="25" rx="4" ry="1.800" fill="#4c5360"/><ellipse cx="26" cy="38" rx="3.500" ry="2" fill="#6e6a66"/>
<ellipse cx="58" cy="44" rx="3.500" ry="2" fill="#27408c"/><ellipse cx="78" cy="33" rx="2" ry="2" fill="#27408c"/><ellipse cx="40" cy="14" rx="2" ry="1.200" fill="#2a4690"/>
</g><rect width="80" height="49" filter="url(#gr)" opacity=".08"/><rect width="80" height="49" filter="url(#gw)" opacity=".05"/></svg></div>
<div class="th" style="left:1088.0px;top:601.0px;width:80px;height:50px;background:#d2b7a3"><svg width="80" height="50" viewBox="0 0 80 50" style="left:0;top:0"><rect width="80" height="49" fill="#d2b7a3"/>
<g filter="url(#b2)">
<ellipse cx="8" cy="6" rx="9" ry="6" fill="#f1ece6"/><ellipse cx="28" cy="9" rx="7" ry="8" fill="#f0e6dc"/><ellipse cx="66" cy="5" rx="7" ry="5" fill="#f1ede9"/><ellipse cx="46" cy="12" rx="5" ry="6" fill="#e7cdbd"/>
<ellipse cx="5" cy="19" rx="6" ry="8" fill="#7f5a46"/><ellipse cx="2" cy="20" rx="2.500" ry="5" fill="#1c2226"/>
<path d="M13 2L21 1L23 28L15 30Z" fill="#1d2529"/><ellipse cx="24" cy="22" rx="4" ry="7" fill="#5a4540"/>
<ellipse cx="41" cy="5" rx="5" ry="5" fill="#3a2c28"/><ellipse cx="57" cy="7" rx="5.500" ry="6" fill="#4a332b"/><ellipse cx="75" cy="8" rx="5" ry="6" fill="#9a6e55"/>
<ellipse cx="60" cy="24" rx="9" ry="8" fill="#8a6450"/><ellipse cx="56" cy="36" rx="7" ry="8" fill="#7a6258"/><ellipse cx="68" cy="33" rx="5" ry="7" fill="#b58e78"/>
<path d="M71 14L81 11V47L73 45Z" fill="#1a2428"/>
<path d="M8 33L40 30L42 50H6Z" fill="#ece3da"/><ellipse cx="30" cy="43" rx="7" ry="4" fill="#f0d8cc"/>
<ellipse cx="6" cy="33" rx="6" ry="4" fill="#a9714f"/><ellipse cx="44" cy="46" rx="6" ry="4" fill="#2c2220"/><ellipse cx="58" cy="47" rx="7" ry="3" fill="#c08a62"/><ellipse cx="3" cy="45" rx="3" ry="5" fill="#3a2a24"/>
</g><g filter="url(#b3)">
<path d="M23 26.500L44 30L43 35L22 32Z" fill="#131d25"/>
<path d="M25.500 16.500L43 19L42.500 29.500L25.500 26Z" fill="#dfe6ee"/><path d="M27.500 18.500L41 20.500L40.500 27L27.500 24.500Z" fill="#8db9e6"/>
<path d="M43 20L47 19L47 34L43 35Z" fill="#b9b7b4"/>
<ellipse cx="11" cy="43.500" rx="2" ry="2.800" fill="#17120f"/>
</g><rect width="80" height="50" filter="url(#gr)" opacity=".08"/><rect width="80" height="50" filter="url(#gw)" opacity=".05"/></svg></div>
<span id="t47" class="t " style="left:349.37px;top:493.00px;font-size:15.80px;letter-spacing:-0.094px;color:#1f2937;">Food Safety</span>
<div class="bar" style="left:350px;top:516px;width:590px;background:#fecaca"></div>
<div class="bar" style="left:350px;top:516px;width:436.6px;background:linear-gradient(90deg,#fb923c,#ef4444)"></div>
<span id="t48" class="t " style="left:947.87px;top:517.00px;font-size:15.80px;letter-spacing:-0.469px;color:#1f2937;">74%</span>
<span id="t49" class="t " style="left:981.56px;top:517.00px;font-size:15.80px;letter-spacing:0.110px;color:#9ca3af;">Correct</span>
<span id="t50" class="t " style="left:350.19px;top:551.00px;font-size:15.80px;letter-spacing:-0.219px;color:#1f2937;">Compliance Basics Procedures</span>
<div class="bar" style="left:350px;top:574px;width:590px;background:#fecaca"></div>
<div class="bar" style="left:350px;top:574px;width:306.8px;background:linear-gradient(90deg,#fb923c,#ef4444)"></div>
<span id="t51" class="t " style="left:947.99px;top:575.00px;font-size:15.80px;letter-spacing:-0.368px;color:#1f2937;">52%</span>
<span id="t52" class="t " style="left:981.56px;top:575.00px;font-size:15.80px;letter-spacing:0.110px;color:#9ca3af;">Correct</span>
<span id="t53" class="t " style="left:350.19px;top:609.00px;font-size:15.80px;letter-spacing:0.248px;color:#1f2937;">Company Networking</span>
<div class="bar" style="left:350px;top:632px;width:590px;background:#fecaca"></div>
<div class="bar" style="left:350px;top:632px;width:212.4px;background:linear-gradient(90deg,#fb923c,#ef4444)"></div>
<span id="t54" class="t " style="left:947.66px;top:633.00px;font-size:15.80px;letter-spacing:-0.201px;color:#1f2937;">36%</span>
<span id="t55" class="t " style="left:981.56px;top:633.00px;font-size:15.80px;letter-spacing:0.110px;color:#9ca3af;">Correct</span>
<span id="t56" class="t " style="left:1184.18px;top:493.00px;font-size:15.80px;letter-spacing:-0.025px;color:#1f2937;">Covid Protocols</span>
<div class="bar" style="left:1184px;top:516px;width:590px;background:#bbf7d0"></div>
<div class="bar" style="left:1184px;top:516px;width:560.5px;background:linear-gradient(90deg,#84cc16,#22c55e)"></div>
<span id="t57" class="t " style="left:1781.22px;top:517.00px;font-size:15.80px;letter-spacing:-0.202px;color:#1f2937;">95%</span>
<span id="t58" class="t " style="left:1815.39px;top:517.00px;font-size:15.80px;letter-spacing:-0.032px;color:#9ca3af;">Correct</span>
<span id="t59" class="t " style="left:1184.18px;top:550.00px;font-size:15.80px;letter-spacing:-0.318px;color:#1f2937;">Cyber Security Basics</span>
<div class="bar" style="left:1184px;top:573px;width:590px;background:#bbf7d0"></div>
<div class="bar" style="left:1184px;top:573px;width:542.8px;background:linear-gradient(90deg,#84cc16,#22c55e)"></div>
<span id="t60" class="t " style="left:1781.22px;top:574.00px;font-size:15.80px;letter-spacing:-0.202px;color:#1f2937;">92%</span>
<span id="t61" class="t " style="left:1815.39px;top:574.00px;font-size:15.80px;letter-spacing:-0.032px;color:#9ca3af;">Correct</span>
<span id="t62" class="t " style="left:1184.02px;top:607.00px;font-size:15.80px;letter-spacing:-0.147px;color:#1f2937;">Social Media Policies</span>
<div class="bar" style="left:1184px;top:630px;width:590px;background:#bbf7d0"></div>
<div class="bar" style="left:1184px;top:630px;width:525.1px;background:linear-gradient(90deg,#84cc16,#22c55e)"></div>
<span id="t63" class="t " style="left:1781.26px;top:631.00px;font-size:15.80px;letter-spacing:-0.205px;color:#1f2937;">89%</span>
<span id="t64" class="t " style="left:1815.39px;top:631.00px;font-size:15.80px;letter-spacing:-0.032px;color:#9ca3af;">Correct</span>
</section><section aria-label="Leaderboards">
<div class="card" style="left:238px;top:686px;width:818px;height:248px"></div>
<div class="card" style="left:1072px;top:686px;width:817px;height:248px"></div>
<span id="t65" class="t sb" style="left:253.75px;top:708.00px;font-size:15.80px;letter-spacing:0.131px;">User Leaderboard</span>
<span id="t66" class="t sb" style="left:1087.16px;top:708.00px;font-size:15.80px;letter-spacing:0.173px;">Groups Leaderboard</span>
<div class="abs" style="left:254.0px;top:743.0px;width:38.0px;height:38.0px;overflow:hidden"><div class="av" style="left:0;top:0;width:38.0px;height:38.0px;background:#e6e6ee"><svg width="38.0" height="38.0" viewBox="0 0 38 38" style="left:0;top:0"><rect width="38" height="38" fill="#e6e6ee"/><g filter="url(#b1)">
<ellipse cx="31" cy="6" rx="6" ry="4" fill="#2cc8a6"/><ellipse cx="5" cy="13" rx="5" ry="5" fill="#2bbfa4"/>
<ellipse cx="6" cy="26" rx="7" ry="5" fill="#e650b4"/><path d="M30 12L36 16L33 30L29 28Z" fill="#5d70c8"/><ellipse cx="33" cy="22" rx="2" ry="5" fill="#e9e9f4"/>
<ellipse cx="19" cy="37" rx="13" ry="5" fill="#e2456e"/>
<ellipse cx="19.500" cy="17.500" rx="9.300" ry="11.500" fill="#6b4637"/><ellipse cx="19.500" cy="7" rx="8.500" ry="4.500" fill="#18100e"/>
<ellipse cx="19.500" cy="17" rx="5.500" ry="6" fill="#8d5c48"/><ellipse cx="19.500" cy="20" rx="2.200" ry="2.500" fill="#c27d63"/>
<ellipse cx="19.500" cy="29.500" rx="8" ry="5.500" fill="#1d1412"/><ellipse cx="19.500" cy="26" rx="3.500" ry="1.700" fill="#6f4a3c"/>
<ellipse cx="15.500" cy="14.500" rx="2" ry=".8" fill="#2a1a16"/><ellipse cx="23.500" cy="14.500" rx="2" ry=".8" fill="#2a1a16"/>
</g><rect width="38" height="38" filter="url(#gr)" opacity=".08"/><rect width="38" height="38" filter="url(#gw)" opacity=".05"/></svg></div></div>
<div class="abs" style="left:254.6px;top:791.8px;width:36.6px;height:36.6px;overflow:hidden"><div class="av" style="left:0;top:0;width:36.6px;height:36.6px;background:#dbd5cf"><svg width="36.6" height="36.6" viewBox="0 0 38 38" style="left:0;top:0"><rect width="38" height="38" fill="#dbd5cf"/><g filter="url(#b1)">
<rect x="-2" y="-2" width="11" height="42" fill="#ece8e4"/><rect x="9" y="0" width="1.500" height="22" fill="#5a5048"/><rect x="26" y="-2" width="14" height="24" fill="#e6e1db"/>
<path d="M2 38L8 30L17 25L28 24L35 30L37 40Z" fill="#5f6461"/>
<path d="M27 10Q34 8 34 18Q34 26 30 30L25 27Q28 22 28 16Z" fill="#8b6a58"/>
<path d="M17 24L24 22L25 28L18 29Z" fill="#a5806c"/>
<ellipse cx="16.500" cy="16" rx="5" ry="7" fill="#b58f78"/><ellipse cx="16" cy="21.500" rx="4" ry="3" fill="#4a3630"/>
<ellipse cx="21" cy="9.500" rx="7.500" ry="5.500" fill="#1e1919"/><ellipse cx="24" cy="14" rx="3.500" ry="4" fill="#241d1c"/>
</g><rect width="38" height="38" filter="url(#gr)" opacity=".08"/><rect width="38" height="38" filter="url(#gw)" opacity=".05"/></svg></div></div>
<div class="abs" style="left:254.0px;top:839.0px;width:38.0px;height:38.0px;overflow:hidden"><div class="av" style="left:0;top:0;width:38.0px;height:38.0px;background:#b5c5cf"><svg width="38.0" height="38.0" viewBox="0 0 38 38" style="left:0;top:0"><rect width="38" height="38" fill="#b5c5cf"/><g filter="url(#b1)">
<rect x="26" y="-2" width="14" height="42" fill="#a7b8c6"/>
<ellipse cx="17" cy="9" rx="11.500" ry="8" fill="#2a1d21"/><ellipse cx="8.500" cy="21" rx="4.500" ry="12" fill="#3a272a"/><ellipse cx="25" cy="31" rx="5" ry="8" fill="#2c1d22"/><ellipse cx="27" cy="16" rx="3" ry="8" fill="#2f2024"/>
<ellipse cx="12" cy="35" rx="9" ry="4.500" fill="#ebebe8"/>
<ellipse cx="19" cy="19" rx="7.300" ry="9.800" fill="#dcbcad"/><ellipse cx="17" cy="15" rx="4" ry="1" fill="#7a5a52"/><ellipse cx="20" cy="25" rx="2" ry=".9" fill="#b07a74"/>
<ellipse cx="30.500" cy="15" rx="2.600" ry="6" fill="#d9b6a6"/><ellipse cx="32" cy="23" rx="2.200" ry="3.500" fill="#c9a898"/><ellipse cx="33.500" cy="27.500" rx="2.500" ry="1.300" fill="#23262c"/>
</g><rect width="38" height="38" filter="url(#gr)" opacity=".08"/><rect width="38" height="38" filter="url(#gw)" opacity=".05"/></svg></div></div>
<div class="abs" style="left:254.0px;top:888.0px;width:38.0px;height:35.0px;overflow:hidden"><div class="av" style="left:0;top:0;width:38.0px;height:38.0px;background:#2d6a56"><svg width="38.0" height="38.0" viewBox="0 0 38 38" style="left:0;top:0"><rect width="38" height="38" fill="#2d6a56"/><g filter="url(#b1)">
<ellipse cx="4" cy="16" rx="3" ry="6" fill="#1f4f42"/><ellipse cx="34" cy="8" rx="3" ry="4" fill="#3f8a6c"/><ellipse cx="35" cy="30" rx="3" ry="5" fill="#3a7e68"/><ellipse cx="6" cy="30" rx="3" ry="5" fill="#24594a"/>
<ellipse cx="19.500" cy="15" rx="12.500" ry="13" fill="#8f6a50"/><ellipse cx="11" cy="30" rx="5.500" ry="10" fill="#8a6148"/><ellipse cx="28" cy="31" rx="5.500" ry="9" fill="#7a5540"/>
<ellipse cx="24" cy="8" rx="8" ry="5" fill="#b08c6c"/><ellipse cx="13" cy="9" rx="5" ry="4" fill="#7a5840"/>
<ellipse cx="32" cy="19" rx="3" ry="5" fill="#d2a286"/>
<ellipse cx="19" cy="35" rx="6" ry="5" fill="#c9977a"/>
<ellipse cx="18" cy="21" rx="7" ry="9.500" fill="#d8a78a"/><ellipse cx="18.500" cy="15.500" rx="5" ry="3" fill="#e6bea2"/>
<ellipse cx="17.500" cy="26.500" rx="3" ry="1.200" fill="#f0e0d8"/><ellipse cx="14.500" cy="19" rx="1.600" ry=".8" fill="#5a3c30"/><ellipse cx="21.500" cy="19" rx="1.600" ry=".8" fill="#5a3c30"/>
<path d="M10 10Q16 8 22 11L12 18Z" fill="#9a7254"/>
</g><rect width="38" height="38" filter="url(#gr)" opacity=".08"/><rect width="38" height="38" filter="url(#gw)" opacity=".05"/></svg></div></div>
<span id="t67" class="t sb" style="left:308.51px;top:748.00px;font-size:15.80px;letter-spacing:-0.379px;color:#1f2937;">Jesse Thomas</span>
<span id="t68" class="t " style="left:308.06px;top:770.00px;font-size:11.80px;letter-spacing:0.012px;color:#1f2937;">637 Points</span>
<span id="t69" class="t " style="left:379.06px;top:770.00px;font-size:11.80px;color:#1f2937;">-</span>
<span id="t70" class="t " style="left:399.83px;top:770.00px;font-size:11.80px;letter-spacing:-0.044px;color:#1f2937;">98% Correct</span>
<span id="t71" class="t sb" style="left:1008.07px;top:756.00px;font-size:15.80px;color:#1f2937;">1</span>
<svg style="left:1020.9px;top:754.7px" width="19.2" height="15" viewBox="0 0 19.2 15" preserveAspectRatio="none" fill="#22dd99"><path d="M8.700 .7Q9.600 -.5 10.500 .7L18.900 13.600Q19.600 15 18.200 15H1Q-.4 15 .3 13.600Z"/></svg>
<span id="t72" class="t sb" style="left:308.63px;top:796.00px;font-size:15.80px;letter-spacing:0.197px;color:#1f2937;">Thisal Mathiyazhagan</span>
<span id="t73" class="t " style="left:308.06px;top:818.00px;font-size:11.80px;letter-spacing:0.012px;color:#1f2937;">637 Points</span>
<span id="t74" class="t " style="left:379.06px;top:818.00px;font-size:11.80px;color:#1f2937;">-</span>
<span id="t75" class="t " style="left:399.83px;top:818.00px;font-size:11.80px;letter-spacing:-0.047px;color:#1f2937;">89% Correct</span>
<span id="t76" class="t sb" style="left:1008.02px;top:804.00px;font-size:15.80px;color:#1f2937;">2</span>
<svg style="left:1020.9px;top:802.6px" width="19.2" height="15" viewBox="0 0 19.2 15" preserveAspectRatio="none" fill="#ff3d14"><path d="M8.700 14.300Q9.600 15.500 10.500 14.300L18.900 1.400Q19.600 0 18.200 0H1Q-.4 0 .3 1.400Z"/></svg>
<span id="t77" class="t sb" style="left:307.58px;top:844.00px;font-size:15.80px;letter-spacing:0.266px;color:#1f2937;">Helen Chuang</span>
<span id="t78" class="t " style="left:308.06px;top:866.00px;font-size:11.80px;letter-spacing:0.012px;color:#1f2937;">637 Points</span>
<span id="t79" class="t " style="left:379.06px;top:866.00px;font-size:11.80px;color:#1f2937;">-</span>
<span id="t80" class="t " style="left:399.83px;top:866.00px;font-size:11.80px;letter-spacing:-0.047px;color:#1f2937;">88% Correct</span>
<span id="t81" class="t sb" style="left:1008.42px;top:852.00px;font-size:15.80px;color:#1f2937;">3</span>
<svg style="left:1020.9px;top:850.7px" width="19.2" height="15" viewBox="0 0 19.2 15" preserveAspectRatio="none" fill="#22dd99"><path d="M8.700 .7Q9.600 -.5 10.500 .7L18.900 13.600Q19.600 15 18.200 15H1Q-.4 15 .3 13.600Z"/></svg>
<span id="t82" class="t sb" style="left:307.73px;top:892.00px;font-size:15.80px;letter-spacing:0.124px;color:#1f2937;">Lura Silverman</span>
<span id="t83" class="t " style="left:308.06px;top:914.00px;font-size:11.80px;letter-spacing:0.012px;color:#1f2937;">637 Points</span>
<span id="t84" class="t " style="left:379.06px;top:914.00px;font-size:11.80px;color:#1f2937;">-</span>
<span id="t85" class="t " style="left:399.83px;top:914.00px;font-size:11.80px;letter-spacing:-0.047px;color:#1f2937;">86% Correct</span>
<span id="t86" class="t sb" style="left:1008.42px;top:900.00px;font-size:15.80px;color:#1f2937;">4</span>
<svg style="left:1020.9px;top:898.7px" width="19.2" height="15" viewBox="0 0 19.2 15" preserveAspectRatio="none" fill="#22dd99"><path d="M8.700 .7Q9.600 -.5 10.500 .7L18.900 13.600Q19.600 15 18.200 15H1Q-.4 15 .3 13.600Z"/></svg>
<span id="t87" class="t sb" style="left:1086.53px;top:748.00px;font-size:15.80px;letter-spacing:0.314px;color:#1f2937;">Houston Facility</span>
<span id="t88" class="t " style="left:1087.63px;top:770.00px;font-size:11.80px;letter-spacing:-0.031px;color:#1f2937;">52 Points / User</span>
<span id="t89" class="t " style="left:1187.20px;top:770.00px;font-size:11.80px;color:#1f2937;">-</span>
<span id="t90" class="t " style="left:1207.44px;top:770.00px;font-size:11.80px;letter-spacing:-0.044px;color:#1f2937;">97% Correct</span>
<span id="t91" class="t sb" style="left:1840.82px;top:756.00px;font-size:15.80px;color:#1f2937;">1</span>
<svg style="left:1853.1px;top:754.7px" width="19.9" height="15" viewBox="0 0 19.2 15" preserveAspectRatio="none" fill="#22dd99"><path d="M8.700 .7Q9.600 -.5 10.500 .7L18.900 13.600Q19.600 15 18.200 15H1Q-.4 15 .3 13.600Z"/></svg>
<span id="t92" class="t sb" style="left:1087.85px;top:796.00px;font-size:15.80px;letter-spacing:0.052px;color:#1f2937;">Test Group</span>
<span id="t93" class="t " style="left:1087.63px;top:818.00px;font-size:11.80px;letter-spacing:-0.031px;color:#1f2937;">52 Points / User</span>
<span id="t94" class="t " style="left:1187.20px;top:818.00px;font-size:11.80px;color:#1f2937;">-</span>
<span id="t95" class="t " style="left:1207.41px;top:818.00px;font-size:11.80px;letter-spacing:-0.037px;color:#1f2937;">95% Correct</span>
<span id="t96" class="t sb" style="left:1840.52px;top:804.00px;font-size:15.80px;color:#1f2937;">2</span>
<svg style="left:1853.1px;top:802.6px" width="19.9" height="15" viewBox="0 0 19.2 15" preserveAspectRatio="none" fill="#ff3d14"><path d="M8.700 14.300Q9.600 15.500 10.500 14.300L18.900 1.400Q19.600 0 18.200 0H1Q-.4 0 .3 1.400Z"/></svg>
<span id="t97" class="t sb" style="left:1087.00px;top:844.00px;font-size:15.80px;letter-spacing:-0.061px;color:#1f2937;">Sales Leadership</span>
<span id="t98" class="t " style="left:1087.63px;top:866.00px;font-size:11.80px;letter-spacing:-0.031px;color:#1f2937;">52 Points / User</span>
<span id="t99" class="t " style="left:1187.20px;top:866.00px;font-size:11.80px;color:#1f2937;">-</span>
<span id="t100" class="t " style="left:1207.41px;top:866.00px;font-size:11.80px;letter-spacing:-0.043px;color:#1f2937;">87% Correct</span>
<span id="t101" class="t sb" style="left:1840.94px;top:852.00px;font-size:15.80px;color:#1f2937;">3</span>
<svg style="left:1853.1px;top:850.7px" width="19.9" height="15" viewBox="0 0 19.2 15" preserveAspectRatio="none" fill="#22dd99"><path d="M8.700 .7Q9.600 -.5 10.500 .7L18.900 13.600Q19.600 15 18.200 15H1Q-.4 15 .3 13.600Z"/></svg>
<span id="t102" class="t sb" style="left:1087.28px;top:892.00px;font-size:15.80px;letter-spacing:0.418px;color:#1f2937;">Northeast Region</span>
<span id="t103" class="t " style="left:1087.63px;top:914.00px;font-size:11.80px;letter-spacing:-0.031px;color:#1f2937;">52 Points / User</span>
<span id="t104" class="t " style="left:1187.20px;top:914.00px;font-size:11.80px;color:#1f2937;">-</span>
<span id="t105" class="t " style="left:1207.41px;top:914.00px;font-size:11.80px;letter-spacing:-0.043px;color:#1f2937;">86% Correct</span>
<span id="t106" class="t sb" style="left:1840.93px;top:900.00px;font-size:15.80px;color:#1f2937;">4</span>
<svg style="left:1853.1px;top:898.7px" width="19.9" height="15" viewBox="0 0 19.2 15" preserveAspectRatio="none" fill="#22dd99"><path d="M8.700 .7Q9.600 -.5 10.500 .7L18.900 13.600Q19.600 15 18.200 15H1Q-.4 15 .3 13.600Z"/></svg>
</section></main></body></html>
